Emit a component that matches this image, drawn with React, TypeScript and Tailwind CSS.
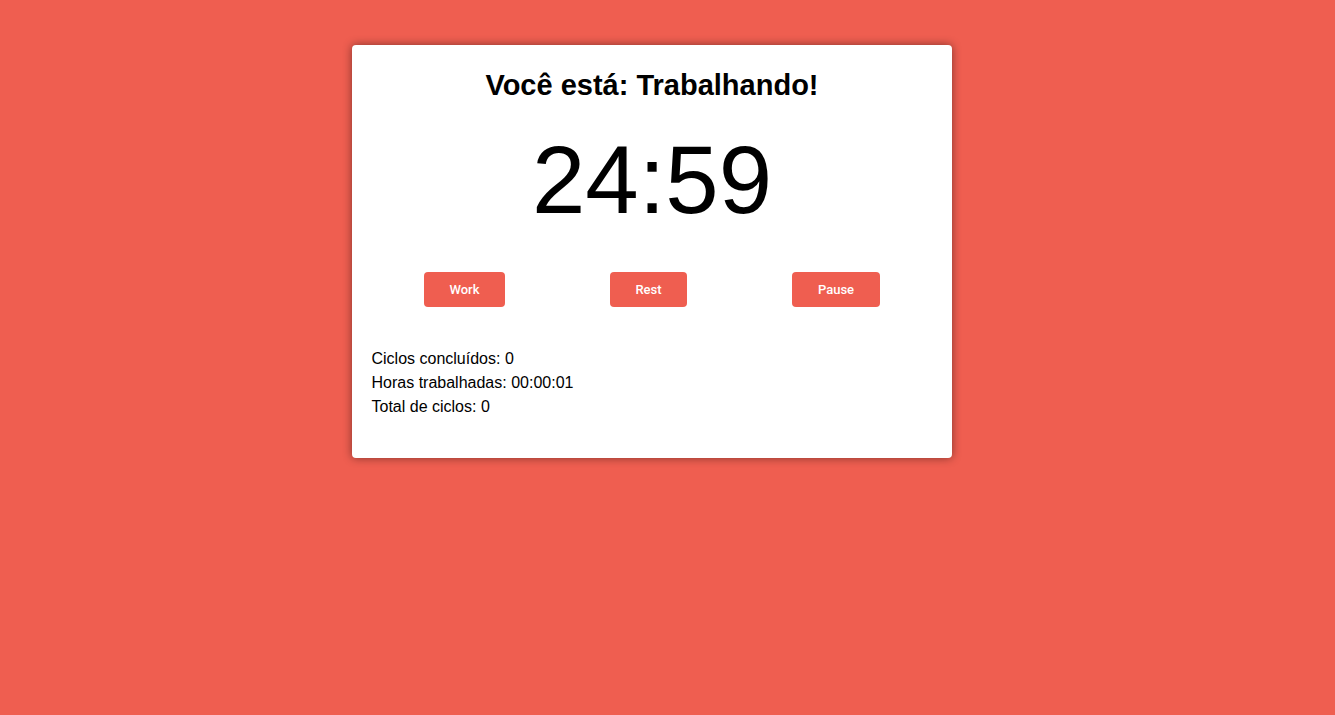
import { useState } from "react";

const stats = [
  { label: "Ciclos concluídos", value: "0" },
  { label: "Horas trabalhadas", value: "00:00:01" },
  { label: "Total de ciclos", value: "0" },
];

export default function App() {
  const [mode, setMode] = useState("Trabalhando");

  return (
    <main className="min-h-[715px] w-full bg-[#ef5e50] flex justify-center pr-[32px] pt-[45px] font-['Liberation_Sans',Arial,sans-serif] text-black">
      <div className="w-[600px] h-fit bg-white rounded-[4px] shadow-[0_0_10px_rgba(0,0,0,0.45)] pl-5 pr-[19px] pt-[22px] pb-[39px]">
        <h1 className="text-center text-[29px] leading-[37px] font-bold">
          Você está: {mode}!
        </h1>
        <div className="mt-[28px] text-center text-[96px] leading-[96px]">24:59</div>
        <div className="mt-[44px] flex justify-around font-['Roboto',sans-serif]">
          <button
            onClick={() => setMode("Trabalhando")}
            className="bg-[#ef5e50] text-white text-[13px] font-medium h-[35px] w-[81px] rounded-[4px]"
          >
            Work
          </button>
          <button
            onClick={() => setMode("Descansando")}
            className="bg-[#ef5e50] text-white text-[13px] font-medium h-[35px] w-[77px] rounded-[4px]"
          >
            Rest
          </button>
          <button
            onClick={() => setMode("Pausado")}
            className="bg-[#ef5e50] text-white text-[13px] font-medium h-[35px] w-[88px] rounded-[4px]"
          >
            Pause
          </button>
        </div>
        <div className="mt-[40px] text-[16px] leading-[24px]">
          {stats.map((s) => (
            <p key={s.label}>
              {s.label}: {s.value}
            </p>
          ))}
        </div>
      </div>
    </main>
  );
}
